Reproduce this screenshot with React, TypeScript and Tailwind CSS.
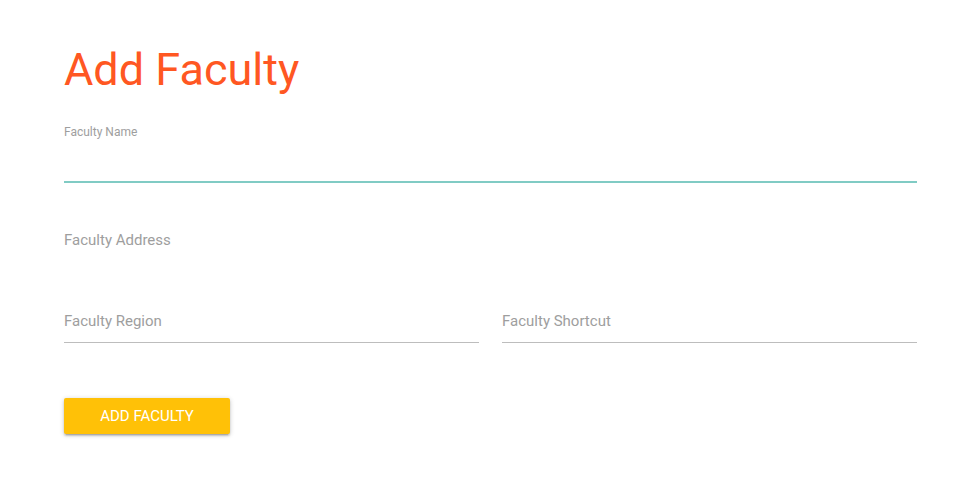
import { useState } from 'react';

// Simple underline-style text field
function Field({ label, value, onChange, underline = 'border-[#bdbdbd]' }: {
  label: string;
  value: string;
  onChange: (v: string) => void;
  underline?: string;
}) {
  return (
    <div className="flex flex-col">
      <label className="text-[15px] leading-6 text-[#9e9e9e]">{label}</label>
      <input
        value={value}
        onChange={e => onChange(e.target.value)}
        className={`h-[10px] border-b ${underline} bg-transparent outline-none`}
      />
    </div>
  );
}

export default function App() {
  const [name, setName] = useState('');
  const [address, setAddress] = useState('');
  const [region, setRegion] = useState('');
  const [shortcut, setShortcut] = useState('');

  return (
    <div className="min-h-[480px] w-full bg-white pl-16 pr-[63px] pt-[45.4px] font-['Roboto',_'Liberation_Sans',_sans-serif]">
      <h3 className="text-[45px] leading-[1.1] font-normal text-[#ff5722]">Add Faculty</h3>

      {/* Faculty Name (active) */}
      <div className="mt-[29px] flex flex-col">
        <label className="text-[12px] leading-4 text-[#9e9e9e]">Faculty Name</label>
        <input
          value={name}
          onChange={e => setName(e.target.value)}
          className="h-[43px] border-b-2 border-[#80cbc4] bg-transparent outline-none"
        />
      </div>

      {/* Faculty Address (textarea, no line) */}
      <div className="mt-[45.5px] flex flex-col">
        <label className="text-[15px] leading-6 text-[#9e9e9e]">Faculty Address</label>
        <textarea
          value={address}
          onChange={e => setAddress(e.target.value)}
          className="h-[57px] resize-none bg-transparent outline-none"
        />
      </div>

      <div className="grid grid-cols-2 gap-[23px]">
        <Field label="Faculty Region" value={region} onChange={setRegion} />
        <Field label="Faculty Shortcut" value={shortcut} onChange={setShortcut} />
      </div>

      <button className="mt-[55px] h-9 w-[166px] rounded-[2px] bg-[#ffc107] text-[15px] uppercase text-white shadow-[0_2px_2px_0_rgba(0,0,0,0.14),0_3px_1px_-2px_rgba(0,0,0,0.12),0_1px_5px_0_rgba(0,0,0,0.2)]">
        Add Faculty
      </button>
    </div>
  );
}
